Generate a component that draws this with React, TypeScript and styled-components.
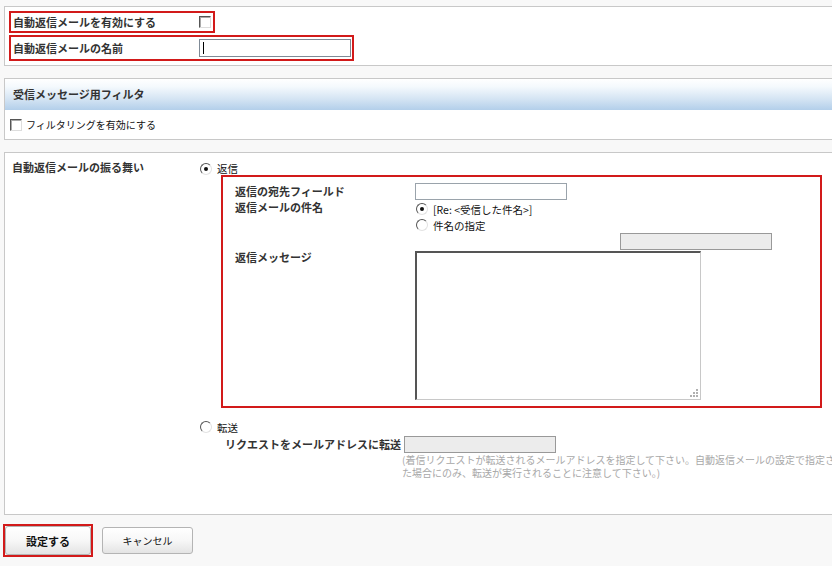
import styled, { createGlobalStyle } from "styled-components"

const Global = createGlobalStyle`
  html, body { margin: 0; padding: 0; background: #f8f8f8; }
  * { box-sizing: border-box; }
`

const Page = styled.div`
  width: 832px;
  height: 566px;
  overflow: hidden;
  background: #f8f8f8;
  padding: 6px 0 0 4px;
  font-family: "Noto Sans CJK JP", "Liberation Sans", sans-serif;
  font-size: 10px;
  color: #111;
`

const Panel = styled.section<{ $mt?: number; $h?: number }>`
  background: #fff;
  border: 1px solid #c8c8c8;
  border-right: none;
  margin-top: ${(p) => p.$mt ?? 0}px;
  height: ${(p) => (p.$h ? `${p.$h}px` : "auto")};
`

const TopBody = styled.div`
  display: flex;
  flex-direction: column;
  align-items: flex-start;
  gap: 2px;
  padding: 4px 0 4px 4px;
`

const RedBox = styled.div<{ $w: number; $h: number }>`
  display: flex;
  align-items: center;
  width: ${(p) => p.$w}px;
  height: ${(p) => p.$h}px;
  border: 2px solid #d21a1a;
  padding: 0 1px;
`

const Label = styled.span<{ $w?: number }>`
  display: block;
  flex: none;
  width: ${(p) => (p.$w ? `${p.$w}px` : "auto")};
  font-size: 11px;
  font-weight: bold;
  color: #333;
  line-height: 13px;
  white-space: nowrap;
`

const Check = styled.span`
  display: block;
  flex: none;
  width: 12px;
  height: 12px;
  background: #fff;
  border-style: solid;
  border-width: 1px;
  border-color: #555 #ddd #ddd #555;
  box-shadow: inset 1px 1px 0 #aaa;
`

const TextInput = styled.span<{ $w?: number; $disabled?: boolean; $dark?: boolean }>`
  display: block;
  flex: none;
  width: ${(p) => p.$w ?? 152}px;
  height: 17px;
  background: ${(p) => (p.$disabled ? "#ececec" : "#fff")};
  border: 1px solid ${(p) => (p.$disabled ? "#999" : p.$dark ? "#7f8a96" : "#9aa3ab")};
  position: relative;
`

const Caret = styled.span`
  position: absolute;
  left: 3px;
  top: 2px;
  width: 1px;
  height: 12px;
  background: #000;
`

const Header = styled.div`
  height: 31px;
  display: flex;
  align-items: center;
  padding-left: 8px;
  background: linear-gradient(to bottom, #ffffff 0%, #f4f9fd 25%, #d4e4f3 65%, #b3cfea 100%);
`

const CheckRow = styled.div`
  height: 29px;
  display: flex;
  align-items: center;
  gap: 4px;
  padding-left: 5px;
  font-size: 10px;
`

const BehaviorGrid = styled.div`
  display: grid;
  grid-template-columns: 195px 1fr;
  height: 361px;
`

const SideLabel = styled.div`
  display: flex;
  align-items: flex-start;
  padding: 8px 0 0 7px;
`

const Options = styled.div`
  display: flex;
  flex-direction: column;
  align-items: flex-start;
  padding-top: 9px;
  min-width: 0;
`

const Radio = styled.span<{ $on?: boolean }>`
  display: block;
  flex: none;
  width: 12px;
  height: 12px;
  border-radius: 50%;
  background: #fff;
  border-style: solid;
  border-width: 1px;
  border-color: #555 #e2e2e2 #e2e2e2 #555;
  position: relative;
  &::after {
    content: "";
    display: ${(p) => (p.$on ? "block" : "none")};
    position: absolute;
    left: 3px;
    top: 3px;
    width: 4px;
    height: 4px;
    border-radius: 50%;
    background: #111;
  }
`

const RadioLine = styled.div<{ $h?: number; $mt?: number; $ml?: number }>`
  display: flex;
  align-items: center;
  gap: 5px;
  height: ${(p) => p.$h ?? 14}px;
  margin-top: ${(p) => p.$mt ?? 0}px;
  margin-left: ${(p) => p.$ml ?? 0}px;
  font-size: 10.5px;
  line-height: 13px;
  white-space: nowrap;
`

const ReplyBox = styled.div`
  margin-left: 21px;
  width: 601px;
  border: 2px solid #d21a1a;
  padding: 6px 0 6px 12px;
  display: grid;
  grid-template-columns: 180px 1fr;
  row-gap: 1px;
`

const Cell = styled.div<{ $pt?: number }>`
  display: flex;
  flex-direction: column;
  align-items: flex-start;
  padding-top: ${(p) => p.$pt ?? 0}px;
`

const Indented = styled.div<{ $ml: number }>`
  margin-left: ${(p) => p.$ml}px;
`

const TextArea = styled.div`
  width: 286px;
  height: 149px;
  background: #fff;
  border-style: solid;
  border-width: 2px 1px 1px 2px;
  border-color: #555 #c8c8c8 #c8c8c8 #555;
  position: relative;
`

const Grip = styled.svg`
  position: absolute;
  right: 2px;
  bottom: 2px;
`

const ForwardRow = styled.div`
  display: flex;
  align-items: center;
  height: 17px;
  margin-top: 2px;
  padding-left: 25px;
`

const Help = styled.div`
  margin-left: 202px;
  width: 430px;
  overflow: hidden;
  display: flex;
  flex-direction: column;
`

const HelpLine = styled.div`
  height: 13px;
  font-size: 10px;
  line-height: 13px;
  color: #a8a8a8;
  white-space: nowrap;
`

const Buttons = styled.div`
  display: flex;
  align-items: center;
  gap: 9px;
  margin-top: 9px;
  margin-left: -1px;
`

const PrimaryFrame = styled.div`
  border: 2px solid #d21a1a;
`

const Button = styled.button<{ $w: number; $h: number; $bold?: boolean }>`
  width: ${(p) => p.$w}px;
  height: ${(p) => p.$h}px;
  border: 1px solid #b4b4b4;
  border-radius: 3px;
  background: linear-gradient(to bottom, #ffffff 0%, #f7f7f7 50%, #e4e4e4 100%);
  font-family: "Noto Sans CJK JP", "Liberation Sans", sans-serif;
  font-size: ${(p) => (p.$bold ? 11 : 10)}px;
  font-weight: ${(p) => (p.$bold ? "bold" : "normal")};
  color: #111;
  padding: 0;
  display: block;
`

export default function App() {
  return (
    <Page>
      <Global />
      <Panel $h={60}>
        <TopBody>
          <RedBox $w={206} $h={22}>
            <Label $w={187} style={{ paddingLeft: 1 }}>自動返信メールを有効にする</Label>
            <Check />
          </RedBox>
          <RedBox $w={345} $h={26}>
            <Label $w={187} style={{ paddingLeft: 1 }}>自動返信メールの名前</Label>
            <TextInput $w={152} $dark style={{ height: 18 }}>
              <Caret />
            </TextInput>
          </RedBox>
        </TopBody>
      </Panel>

      <Panel $mt={12}>
        <Header>
          <Label>受信メッセージ用フィルタ</Label>
        </Header>
        <CheckRow>
          <Check />
          <span>フィルタリングを有効にする</span>
        </CheckRow>
      </Panel>

      <Panel $mt={12}>
        <BehaviorGrid>
          <SideLabel>
            <Label>自動返信メールの振る舞い</Label>
          </SideLabel>
          <Options>
            <RadioLine $h={13}>
              <Radio $on />
              <span>返信</span>
            </RadioLine>
            <ReplyBox>
              <Cell $pt={2}>
                <Label>返信の宛先フィールド</Label>
              </Cell>
              <Cell>
                <TextInput $w={152} />
              </Cell>
              <Cell $pt={0}>
                <Label>返信メールの件名</Label>
              </Cell>
              <Cell>
                <RadioLine $h={16} $ml={1}>
                  <Radio $on />
                  <span>[Re: &lt;受信した件名&gt;]</span>
                </RadioLine>
                <RadioLine $h={16} $ml={1}>
                  <Radio />
                  <span>件名の指定</span>
                </RadioLine>
                <Indented $ml={205}>
                  <TextInput $w={152} $disabled />
                </Indented>
              </Cell>
              <Cell $pt={0}>
                <Label>返信メッセージ</Label>
              </Cell>
              <Cell>
                <TextArea>
                  <Grip width="9" height="9" viewBox="0 0 9 9">
                    <g fill="#b0b0b0">
                      <rect x="7" y="1" width="2" height="2" />
                      <rect x="4" y="4" width="2" height="2" />
                      <rect x="7" y="4" width="2" height="2" />
                      <rect x="1" y="7" width="2" height="2" />
                      <rect x="4" y="7" width="2" height="2" />
                      <rect x="7" y="7" width="2" height="2" />
                    </g>
                  </Grip>
                </TextArea>
              </Cell>
            </ReplyBox>
            <RadioLine $mt={12}>
              <Radio />
              <span>転送</span>
            </RadioLine>
            <ForwardRow>
              <Label $w={179}>リクエストをメールアドレスに転送</Label>
              <TextInput $w={152} $disabled />
            </ForwardRow>
            <Help>
              <HelpLine>(着信リクエストが転送されるメールアドレスを指定して下さい。自動返信メールの設定で指定された条件に合致し</HelpLine>
              <HelpLine>た場合にのみ、転送が実行されることに注意して下さい。)</HelpLine>
            </Help>
          </Options>
        </BehaviorGrid>
      </Panel>

      <Buttons>
        <PrimaryFrame>
          <Button $w={86} $h={29} $bold>設定する</Button>
        </PrimaryFrame>
        <Button $w={91} $h={27}>キャンセル</Button>
      </Buttons>
    </Page>
  )
}
